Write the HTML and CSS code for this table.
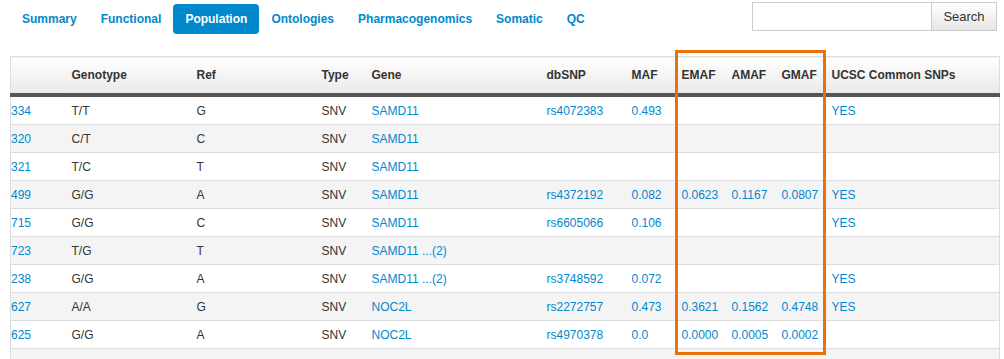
FILE: index.html
```html
<!DOCTYPE html>
<html lang="en">
<head>
  <meta charset="UTF-8">
  <meta name="viewport" content="width=device-width, initial-scale=1.0">
  <title>Population</title>
  <link rel="stylesheet" href="styles.css">
</head>
<body>
  <div class="topbar">
    <nav class="tabs" aria-label="Sections">
      <a href="#summary">Summary</a>
      <a href="#functional">Functional</a>
      <a href="#population" class="active">Population</a>
      <a href="#ontologies">Ontologies</a>
      <a href="#pharmacogenomics">Pharmacogenomics</a>
      <a href="#somatic">Somatic</a>
      <a href="#qc">QC</a>
    </nav>
    <form class="search">
      <input type="text" aria-label="Search">
      <button type="button">Search</button>
    </form>
  </div>

  <div class="results">
    <table class="variants">
      <colgroup>
        <col class="c-id">
        <col class="c-geno">
        <col class="c-ref">
        <col class="c-type">
        <col class="c-gene">
        <col class="c-snp">
        <col class="c-maf">
        <col class="c-maf">
        <col class="c-maf">
        <col class="c-maf">
        <col class="c-ucsc">
      </colgroup>
      <thead>
        <tr>
          <th></th>
          <th>Genotype</th>
          <th>Ref</th>
          <th>Type</th>
          <th>Gene</th>
          <th>dbSNP</th>
          <th>MAF</th>
          <th>EMAF</th>
          <th>AMAF</th>
          <th>GMAF</th>
          <th>UCSC Common SNPs</th>
        </tr>
      </thead>
      <tbody>
        <tr>
          <td><a href="#">334</a></td><td>T/T</td><td>G</td><td>SNV</td><td><a href="#">SAMD11</a></td>
          <td><a href="#">rs4072383</a></td><td><a href="#">0.493</a></td><td></td><td></td><td></td><td><a href="#">YES</a></td>
        </tr>
        <tr>
          <td><a href="#">320</a></td><td>C/T</td><td>C</td><td>SNV</td><td><a href="#">SAMD11</a></td>
          <td></td><td></td><td></td><td></td><td></td><td></td>
        </tr>
        <tr>
          <td><a href="#">321</a></td><td>T/C</td><td>T</td><td>SNV</td><td><a href="#">SAMD11</a></td>
          <td></td><td></td><td></td><td></td><td></td><td></td>
        </tr>
        <tr>
          <td><a href="#">499</a></td><td>G/G</td><td>A</td><td>SNV</td><td><a href="#">SAMD11</a></td>
          <td><a href="#">rs4372192</a></td><td><a href="#">0.082</a></td><td><a href="#">0.0623</a></td><td><a href="#">0.1167</a></td><td><a href="#">0.0807</a></td><td><a href="#">YES</a></td>
        </tr>
        <tr>
          <td><a href="#">715</a></td><td>G/G</td><td>C</td><td>SNV</td><td><a href="#">SAMD11</a></td>
          <td><a href="#">rs6605066</a></td><td><a href="#">0.106</a></td><td></td><td></td><td></td><td><a href="#">YES</a></td>
        </tr>
        <tr>
          <td><a href="#">723</a></td><td>T/G</td><td>T</td><td>SNV</td><td><a href="#">SAMD11 ...(2)</a></td>
          <td></td><td></td><td></td><td></td><td></td><td></td>
        </tr>
        <tr>
          <td><a href="#">238</a></td><td>G/G</td><td>A</td><td>SNV</td><td><a href="#">SAMD11 ...(2)</a></td>
          <td><a href="#">rs3748592</a></td><td><a href="#">0.072</a></td><td></td><td></td><td></td><td><a href="#">YES</a></td>
        </tr>
        <tr>
          <td><a href="#">627</a></td><td>A/A</td><td>G</td><td>SNV</td><td><a href="#">NOC2L</a></td>
          <td><a href="#">rs2272757</a></td><td><a href="#">0.473</a></td><td><a href="#">0.3621</a></td><td><a href="#">0.1562</a></td><td><a href="#">0.4748</a></td><td><a href="#">YES</a></td>
        </tr>
        <tr>
          <td><a href="#">625</a></td><td>G/G</td><td>A</td><td>SNV</td><td><a href="#">NOC2L</a></td>
          <td><a href="#">rs4970378</a></td><td><a href="#">0.0</a></td><td><a href="#">0.0000</a></td><td><a href="#">0.0005</a></td><td><a href="#">0.0002</a></td><td></td>
        </tr>
        <tr>
          <td></td><td></td><td></td><td></td><td></td><td></td><td></td><td></td><td></td><td></td><td></td>
        </tr>
      </tbody>
    </table>
    <!-- annotation box over the frequency columns -->
    <div class="highlight"></div>
  </div>
</body>
</html>
```

FILE: styles.css
```css
html, body {
  margin: 0;
  padding: 0;
  overflow: hidden;
  height: 359px;
  background: #fff;
  font-family: 'Liberation Sans', Arial, sans-serif;
  font-size: 12px;
  color: #333;
}

a {
  color: #0088cc;
  text-decoration: none;
}

.topbar {
  display: flex;
  justify-content: space-between;
  align-items: flex-start;
  height: 32px;
  padding: 2px 7px 0 10px;
}

.tabs {
  display: flex;
  margin-top: 2px;
}

.tabs a {
  display: block;
  height: 30px;
  line-height: 30px;
  padding: 0 12px;
  font-weight: bold;
  font-size: 12px;
  border-radius: 4px;
}

.tabs a.active {
  background: #0088cc;
  color: #fff;
}

.search {
  display: flex;
  margin: 0;
}

.search input {
  box-sizing: border-box;
  width: 179px;
  height: 29px;
  margin: 0;
  padding: 0 4px;
  border: 1px solid #ccc;
  border-right: none;
  font-family: inherit;
}

.search button {
  width: 66px;
  height: 29px;
  margin: 0;
  border: 1px solid #ccc;
  background: linear-gradient(to bottom, #ffffff, #e6e6e6);
  font-family: 'Liberation Sans', Arial, sans-serif;
  font-size: 13px;
  color: #333;
  cursor: pointer;
}

.results {
  position: relative;
  margin: 22px 0 0 10px;
}

.variants {
  width: 990px;
  table-layout: fixed;
  border-collapse: collapse;
  border: 1px solid #ddd;
}

.c-id { width: 55px; }
.c-geno { width: 125px; }
.c-ref { width: 125px; }
.c-type { width: 50px; }
.c-gene { width: 175px; }
.c-snp { width: 85px; }
.c-maf { width: 50px; }
.c-ucsc { width: 174px; }

.variants th,
.variants td {
  padding: 0 6px;
  text-align: left;
  white-space: nowrap;
  overflow: hidden;
}

.variants th:first-child,
.variants td:first-child {
  padding-left: 0;
}

.variants th {
  height: 36px;
  font-weight: bold;
  background: linear-gradient(to bottom, #ffffff, #e9e9e9);
  border-bottom: 4px solid #555;
}

.variants td {
  height: 26px;
  padding-top: 1px;
  border-bottom: 1px solid #ddd;
}

.variants tbody tr:nth-child(even) td {
  background: #f4f4f4;
}

.highlight {
  position: absolute;
  left: 665px;
  top: -6px;
  width: 145px;
  height: 299px;
  border: 3px solid #e8710a;
  pointer-events: none;
}
```
